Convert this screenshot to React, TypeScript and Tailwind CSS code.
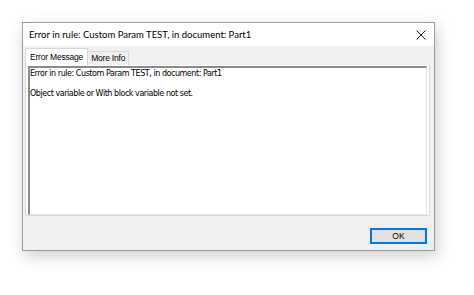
import React from "react";

const sans = { fontFamily: '"Liberation Sans", Arial, sans-serif' };
const title = { fontFamily: 'Lato, "Liberation Sans", sans-serif' };
const tahoma = { fontFamily: '"DejaVu Sans", "Liberation Sans", sans-serif' };

export default function App() {
    return (
        <div className="w-[474px] h-[295px] bg-white pt-[22px] pl-[22px]" style={sans}>
            <div className="w-[413px] h-[229px] border border-[#9c9c9c] bg-[#f0f0f0] flex flex-col shadow-[2px_5px_14px_rgba(0,0,0,0.2)]">
                {/* title bar */}
                <div className="h-[23px] bg-white flex items-center justify-between pl-[6px] pr-[6px]">
                    <span className="text-[9.5px] text-black leading-none" style={title}>Error in rule: Custom Param TEST, in document: Part1</span>
                    <svg width="10" height="10" viewBox="0 0 10 10" className="mr-[2px]">
                        <path d="M0.5 0.5 L9.5 9.5 M9.5 0.5 L0.5 9.5" stroke="#1a1a1a" strokeWidth="1" />
                    </svg>
                </div>
                {/* body */}
                <div className="flex-1 flex flex-col px-[2px] pt-[2px] pb-[6px]">
                    <div className="flex items-end h-[17px] text-[8.5px] tracking-[-0.2px] text-black">
                        <div className="h-[17px] px-[4px] bg-white border-l border-t border-r border-[#d9d9d9] flex items-center">Error Message</div>
                        <div className="h-[14px] px-[3px] bg-[#f0f0f0] border-t border-r border-[#d9d9d9] flex items-center">More Info</div>
                    </div>
                    <div className="h-[151px] bg-white border border-[#d9d9d9] border-t-0 mr-[2px] px-[2px] pt-[1px]">
                        <div className="h-[149px] border-l-2 border-t-2 border-l-[#8a8a8a] border-t-[#8a8a8a] border-r border-b border-r-[#e3e3e3] border-b-[#e3e3e3] text-[8px] tracking-[-0.45px] text-black leading-[10px] pt-[1px]" style={tahoma}>
                            <div>Error in rule: Custom Param TEST, in document: Part1</div>
                            <div className="h-[10px]" />
                            <div>Object variable or With block variable not set.</div>
                        </div>
                    </div>
                    <div className="flex-1 flex items-end justify-end pr-[5px]">
                        <button className="w-[57px] h-[16px] bg-[#e1e1e1] border-2 border-[#0078d7] text-[8.5px] text-black leading-none flex items-center justify-center">OK</button>
                    </div>
                </div>
            </div>
        </div>
    );
}
